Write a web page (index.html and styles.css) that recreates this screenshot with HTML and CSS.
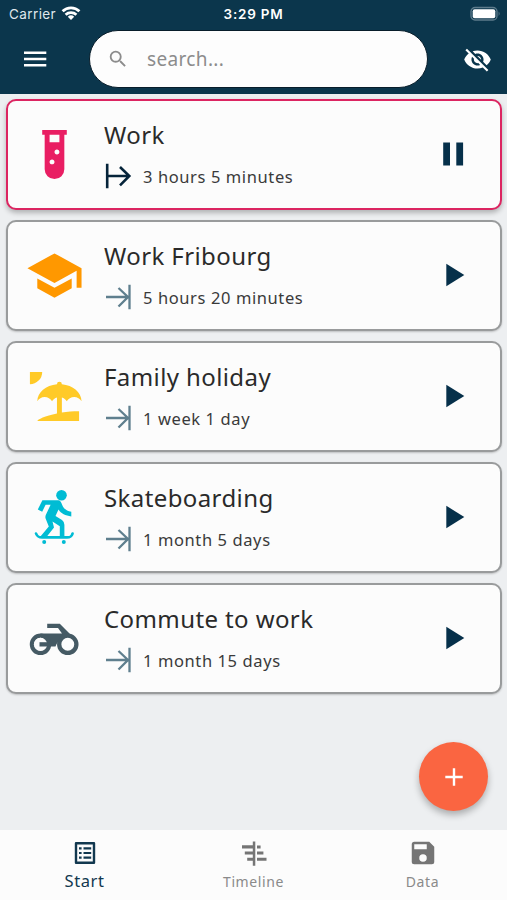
FILE: index.html
```html
<!DOCTYPE html>
<html lang="en">
<head>
    <meta charset="UTF-8">
    <meta name="viewport" content="width=device-width, initial-scale=1.0">
    <title>Time tracker</title>
    <link rel="stylesheet" href="styles.css">
</head>
<body>
    <svg class="defs" width="0" height="0">
        <symbol id="until" viewBox="0 0 28 26">
            <path d="M2 13H25M14.500 4L24 13L14.500 22.500M25.500 .7V25.300" fill="none" stroke="currentColor" stroke-width="2.300"/>
        </symbol>
        <symbol id="play" viewBox="0 0 24 24">
            <path d="M5.300 .8V23.200L23.300 12Z" fill="currentColor"/>
        </symbol>
    </svg>

    <header>
        <div class="status">
            <div class="carrier">
                <span>Carrier</span>
                <svg width="20" height="16" viewBox="0 0 20 16" fill="none" stroke="#fff" stroke-width="2.800">
                    <path d="M1.600 6.300A12 12 0 0 1 18.400 6.300M4.600 9.700A8 8 0 0 1 15.400 9.700"/>
                    <path d="M10 15L6.800 11.800A4.800 4.800 0 0 1 13.200 11.800Z" fill="#fff" stroke="none"/>
                </svg>
            </div>
            <span class="clock">3:29 PM</span>
            <svg class="battery" width="32" height="16" viewBox="0 0 32 16">
                <rect x="1" y="1.500" width="26" height="12.500" rx="4" fill="none" stroke="#5d7b8b" stroke-width="1.300"/>
                <rect x="2.700" y="3.200" width="22.600" height="9.100" rx="2" fill="#fff"/>
                <path d="M28.600 5.500Q30.600 7.700 28.600 10Z" fill="#5d7b8b"/>
            </svg>
        </div>
        <div class="toolbar">
            <svg class="menu" width="24" height="18" viewBox="0 0 24 18" fill="#fff">
                <path d="M1 1.500H23.300V4H1ZM1 7.700H23.300V10.200H1ZM1 14H23.300V16.500H1Z"/>
            </svg>
            <div class="search">
                <svg width="22" height="22" viewBox="0 0 24 24" fill="#8c8c8c">
                    <path d="M15.500 14h-.79l-.28-.27A6.470 6.470 0 0 0 16 9.500 6.500 6.500 0 1 0 9.500 16c1.610 0 3.090-.59 4.230-1.570l.27.28v.79l5 4.990L20.490 19zM9.500 14A4.500 4.500 0 1 1 9.500 5a4.500 4.500 0 0 1 0 9z"/>
                </svg>
                <span>search...</span>
            </div>
            <svg class="eye" width="29" height="29" viewBox="0 0 24 24" fill="#fff">
                <path d="M12 7c2.760 0 5 2.240 5 5 0 .65-.13 1.260-.36 1.830l2.920 2.920c1.510-1.260 2.700-2.890 3.430-4.750-1.730-4.390-6-7.500-11-7.500-1.400 0-2.740.25-3.980.7l2.160 2.160C10.740 7.130 11.350 7 12 7zM2 4.270l2.280 2.280.46.46C3.080 8.300 1.780 10.020 1 12c1.730 4.390 6 7.500 11 7.500 1.550 0 3.030-.3 4.380-.84l.42.42L19.730 22 21 20.730 3.270 3 2 4.270zM7.530 9.800l1.550 1.550c-.05.21-.08.43-.08.65 0 1.660 1.340 3 3 3 .22 0 .44-.03.65-.08l1.550 1.550c-.67.33-1.410.53-2.200.53-2.760 0-5-2.240-5-5 0-.79.2-1.530.53-2.200zm4.310-.78l3.150 3.150.02-.16c0-1.660-1.340-3-3-3l-.17.01z"/>
            </svg>
        </div>
    </header>

    <main>
        <div class="card active">
            <svg class="icon pink" viewBox="0 0 24 24">
                <path d="M7,2V4H8V18A4,4 0 0,0 12,22A4,4 0 0,0 16,18V4H17V2H7M11,16C10.400,16 10,15.600 10,15C10,14.400 10.400,14 11,14C11.600,14 12,14.400 12,15C12,15.600 11.600,16 11,16M13,12C12.400,12 12,11.600 12,11C12,10.400 12.400,10 13,10C13.600,10 14,10.400 14,11C14,11.600 13.600,12 13,12M14,7H10V4H14V7Z"/>
            </svg>
            <div class="info">
                <h2>Work</h2>
                <p>
                    <svg class="arrow" viewBox="0 0 28 26">
                        <path d="M3.200 .7V25.300M3 13H25.500M16 4L25.300 13L16 22.300" fill="none" stroke="currentColor" stroke-width="2.600"/>
                    </svg>
                    <span>3 hours 5 minutes</span>
                </p>
            </div>
            <svg class="action" viewBox="0 0 24 24">
                <path d="M2.200 .5H9V23.500H2.200ZM15.300 .5H22.100V23.500H15.300Z" fill="currentColor"/>
            </svg>
        </div>

        <div class="card">
            <svg class="icon orange" viewBox="0 0 24 24">
                <path d="M12,3L1,9L12,15L21,10.090V17H23V9M5,13.180V17.180L12,21L19,17.180V13.180L12,17L5,13.180Z"/>
            </svg>
            <div class="info">
                <h2>Work Fribourg</h2>
                <p><svg class="arrow"><use href="#until"/></svg><span>5 hours 20 minutes</span></p>
            </div>
            <svg class="action"><use href="#play"/></svg>
        </div>

        <div class="card">
            <svg class="icon yellow" viewBox="0 0 24 24">
                <path d="M15,18.540C17.130,18.210 19.500,18 22,18V22H5C5,21.350 8.200,19.860 13,18.900V12.400C12.160,12.650 11.450,13.210 11,13.950C10.390,12.930 9.270,12.250 8,12.250C6.730,12.250 5.610,12.930 5,13.950C5.030,10.370 8.500,7.430 13,7.040V7A1,1 0 0,1 14,6A1,1 0 0,1 15,7V7.040C19.500,7.430 22.960,10.370 23,13.950C22.390,12.930 21.270,12.250 20,12.250C18.730,12.250 17.610,12.930 17,13.950C16.550,13.210 15.840,12.650 15,12.400V18.540M7,2A5,5 0 0,1 2,7V2H7Z"/>
            </svg>
            <div class="info">
                <h2>Family holiday</h2>
                <p><svg class="arrow"><use href="#until"/></svg><span>1 week 1 day</span></p>
            </div>
            <svg class="action"><use href="#play"/></svg>
        </div>

        <div class="card">
            <svg class="icon cyan" viewBox="0 0 59 59">
                <circle cx="36.500" cy="7.300" r="5.300"/>
                <path d="M17.400 12.200H33.500C35.500 12.500 36.300 14.500 37 16.500C38.500 20.500 41.500 23 46.300 23.800V28.400C40.500 28 36 25.500 33.500 21.600L30.500 28L37 32Q39.400 33.800 39.400 36.800V49H34.800V38.200L27.500 33.500L29 39.500L21.500 49H15L23.800 38.600L20.600 30.500Q20 28.500 21 26.500L25.600 16.800H20.600L17.200 23.700L12.800 21.600Z"/>
                <path d="M11 45.500C12.500 49 14 49.400 17 49.400H42C45 49.400 46.500 49 47.600 45.500" fill="none" stroke="currentColor" stroke-width="2.600" stroke-linecap="round"/>
                <circle cx="19.200" cy="54" r="2"/>
                <circle cx="38.800" cy="54" r="2"/>
            </svg>
            <div class="info">
                <h2>Skateboarding</h2>
                <p><svg class="arrow"><use href="#until"/></svg><span>1 month 5 days</span></p>
            </div>
            <svg class="action"><use href="#play"/></svg>
        </div>

        <div class="card">
            <svg class="icon slate" viewBox="0 0 59 59">
                <path d="M22.200 14.700H34.800L45 25L40 28C35 29.500 32.500 33 30.500 37.500H14.500V33.200H22L15.500 27V24.600H37L33 19H22.200Z"/>
                <circle cx="15.500" cy="35.300" r="8.600" fill="none" stroke="currentColor" stroke-width="4.300"/>
                <circle cx="42.800" cy="35.300" r="8.600" fill="#fcfcfc" stroke="currentColor" stroke-width="4.300"/>
                <circle cx="15.500" cy="35.300" r="6.600" fill="#fcfcfc"/>
                <path d="M14.500 33.200H23V37.500H14.500Z"/>
            </svg>
            <div class="info">
                <h2>Commute to work</h2>
                <p><svg class="arrow"><use href="#until"/></svg><span>1 month 15 days</span></p>
            </div>
            <svg class="action"><use href="#play"/></svg>
        </div>
    </main>

    <button class="add" aria-label="Add">
        <svg width="18" height="18" viewBox="0 0 18 18">
            <path d="M9 .3V17.700M.3 9H17.700" stroke="#fff" stroke-width="2.400"/>
        </svg>
    </button>

    <nav>
        <a class="tab selected">
            <svg width="26" height="26" viewBox="0 0 24 26">
                <path d="M3 3.200H21V22.800H3Z" fill="none" stroke="currentColor" stroke-width="2.400" stroke-linejoin="round"/>
                <path d="M6 7.200H8.600V9.400H6ZM6 11.900H8.600V14.100H6ZM6 16.600H8.600V18.800H6ZM10.500 7.200H18.200V9.400H10.500ZM10.500 11.900H18.200V14.100H10.500ZM10.500 16.600H18.200V18.800H10.500Z" fill="currentColor"/>
            </svg>
            <span>Start</span>
        </a>
        <a class="tab">
            <svg width="26" height="26" viewBox="0 0 26 26" fill="currentColor">
                <path d="M11.800 1.600H14.300V25.800H11.800ZM1 5.200H12V8.400H1ZM3.800 11.600H12V14.600H3.800ZM6.200 17.800H12V20.800H6.200ZM16 5.400H19.600V8.400H16ZM16 11.600H22.400V14.600H16ZM16 17.800H25.500V20.800H16Z"/>
            </svg>
            <span>Timeline</span>
        </a>
        <a class="tab">
            <svg width="30" height="30" viewBox="0 0 24 24" fill="currentColor">
                <path d="M17 3H5a2 2 0 0 0-2 2v14a2 2 0 0 0 2 2h14a2 2 0 0 0 2-2V7zM12 19a3 3 0 1 1 0-6 3 3 0 0 1 0 6zM15 9H5V5h10z"/>
            </svg>
            <span>Data</span>
        </a>
    </nav>
</body>
</html>
```
FILE: styles.css
```css
* {
    box-sizing: border-box;
}

body {
    font-family: "Noto Sans", "Open Sans", sans-serif;
    margin: 0;
    height: 900px;
    display: flex;
    flex-direction: column;
    position: relative;
    background-color: #edeff1;
    color: #2a2a2a;
    overflow: hidden;
}

svg {
    display: block;
    flex: none;
}

.defs {
    position: absolute;
}

header {
    height: 94px;
    background-color: #0b364c;
    color: #fff;
}

.status {
    display: grid;
    grid-template-columns: 1fr auto 1fr;
    align-items: center;
    height: 28px;
    padding: 0 6px 0 9px;
    font-family: Inter, sans-serif;
    font-size: 13.5px;
}

.carrier {
    display: flex;
    align-items: center;
    gap: 5px;
    color: #dfe7eb;
    letter-spacing: 0.4px;
}

.carrier svg {
    margin-top: -3px;
}

.clock {
    margin-left: -3px;
    font-weight: 600;
    letter-spacing: 0.75px;
}

.battery {
    justify-self: end;
    margin: -1px -1px 0 0;
}

.toolbar {
    display: flex;
    align-items: center;
    padding: 2px 15px 0 23px;
}

.search {
    display: flex;
    align-items: center;
    gap: 18px;
    width: 339px;
    height: 58px;
    margin: 0 35px 0 42px;
    padding: 0 18px 0 17px;
    border: 1px solid #081d2a;
    border-radius: 29px;
    background-color: #fdfdfd;
    color: #8c8c8c;
    font-size: 19px;
    letter-spacing: 0.35px;
}

main {
    flex: 1;
    display: flex;
    flex-direction: column;
    gap: 10px;
    padding: 5px 5px 0 6px;
}

.card {
    display: flex;
    align-items: center;
    height: 111px;
    padding: 0 35px 0 17px;
    border: 2px solid #999b9c;
    border-radius: 10px;
    background-color: #fcfcfc;
    box-shadow: 0 1px 2px rgba(0, 0, 0, 0.2);
}

.active {
    border-color: #dc2561;
    box-shadow: 0 3px 5px rgba(0, 0, 0, 0.25);
}

.icon {
    width: 59px;
    height: 59px;
    fill: currentColor;
}

.pink { color: #e91e63; }
.orange { color: #ff9800; }
.yellow { color: #ffca28; }
.cyan { color: #00bcd4; }
.slate { color: #455a64; }

.info {
    flex: 1;
    padding: 0 0 3px 20px;
}

h2 {
    margin: 0;
    font-size: 24px;
    font-weight: 400;
    line-height: 36px;
    letter-spacing: 0.4px;
}

p {
    display: flex;
    align-items: center;
    gap: 11px;
    height: 26px;
    margin: 10px 0 0;
    font-size: 16.5px;
    letter-spacing: 0.6px;
    color: #3a3a3a;
}

.arrow {
    width: 28px;
    height: 26px;
    color: #5f7f8e;
}

.action {
    width: 24px;
    height: 24px;
    margin-bottom: 1px;
    color: #06304a;
}

.active .arrow {
    color: #06243a;
}

.add {
    position: absolute;
    right: 19px;
    bottom: 89px;
    width: 69px;
    height: 69px;
    display: flex;
    align-items: center;
    justify-content: center;
    border: none;
    border-radius: 50%;
    background-color: #fa6541;
    box-shadow: 0 4px 7px rgba(0, 0, 0, 0.28);
}

nav {
    display: grid;
    grid-template-columns: repeat(3, 1fr);
    height: 70px;
    background-color: #fcfcfc;
}

.tab {
    display: flex;
    flex-direction: column;
    align-items: center;
    justify-content: space-between;
    padding: 10px 0 8px;
    color: #757575;
    font-size: 14px;
    line-height: 20px;
    letter-spacing: 0.6px;
}

.tab span {
    color: #8a8a8a;
}

.tab:last-child {
    padding-top: 8px;
}

.selected {
    padding-bottom: 9px;
    font-size: 16.5px;
}

.selected, .selected span {
    color: #12384f;
}
```
